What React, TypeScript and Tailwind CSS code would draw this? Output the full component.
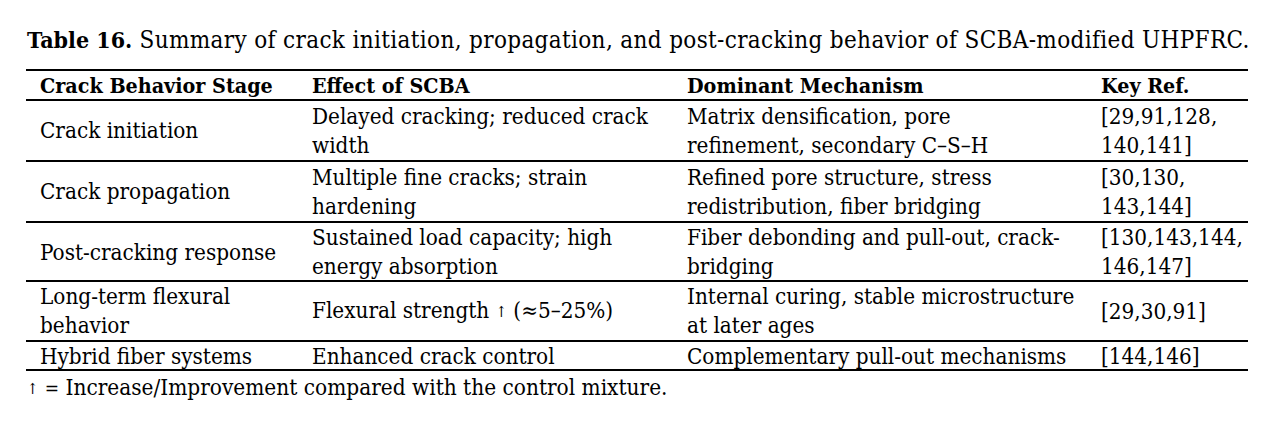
import React from "react";

type Cell = string[];
const rows: { c: Cell[]; h: string }[] = [
  { c: [["Crack initiation"], ["Delayed cracking; reduced crack", "width"], ["Matrix densification, pore", "refinement, secondary C–S–H"], ["[29,91,128,", "140,141]"]], h: "h-[61px]" },
  { c: [["Crack propagation"], ["Multiple fine cracks; strain", "hardening"], ["Refined pore structure, stress", "redistribution, fiber bridging"], ["[30,130,", "143,144]"]], h: "h-[61px]" },
  { c: [["Post-cracking response"], ["Sustained load capacity; high", "energy absorption"], ["Fiber debonding and pull-out, crack-", "bridging"], ["[130,143,144,", "146,147]"]], h: "h-[59px]" },
  { c: [["Long-term flexural", "behavior"], ["FLEX"], ["Internal curing, stable microstructure", "at later ages"], ["[29,30,91]"]], h: "h-[60px]" },
  { c: [["Hybrid fiber systems"], ["Enhanced crack control"], ["Complementary pull-out mechanisms"], ["[144,146]"]], h: "h-[29px]" },
];

const cols = "grid grid-cols-[272px_375px_414px_161px]";

function Arrow() {
  return <span className="text-[15px] align-[1px]">↑</span>;
}

export default function App() {
  return (
    <div
      className="w-[1275px] h-[428px] bg-white text-black"
      style={{ fontFamily: '"DejaVu Serif Condensed", "DejaVu Serif", serif', fontStretch: "condensed" }}
    >
      <div className="pt-[26px] pl-[27px] text-[24px] leading-[28px] whitespace-nowrap">
        <span className="font-bold text-[23px]">Table 16.</span>
        <span className="tracking-[0.35px]"> Summary of crack initiation, propagation, and post-cracking behavior of SCBA-modified UHPFRC.</span>
      </div>
      <div className="ml-[26px] mt-[15px] w-[1222px] border-t-2 border-black text-[22.3px] leading-[29px]">
        <div className={`${cols} h-[30px] border-b-2 border-black font-bold items-center text-[21.3px]`}>
          <div className="pl-[14px]">Crack Behavior Stage</div>
          <div className="pl-[14px]">Effect of SCBA</div>
          <div className="pl-[14px]">Dominant Mechanism</div>
          <div className="pl-[14px]">Key Ref.</div>
        </div>
        {rows.map((r, i) => (
          <div key={i} className={`${cols} ${r.h} border-b-2 border-black items-center`}>
            {r.c.map((lines, j) => (
              <div key={j} className="pl-[14px] whitespace-nowrap">
                {lines.map((t, k) => (
                  <div key={k}>
                    {t === "FLEX" ? (
                      <>
                        Flexural strength <Arrow /> (≈5–25%)
                      </>
                    ) : (
                      t
                    )}
                  </div>
                ))}
              </div>
            ))}
          </div>
        ))}
      </div>
      <div className="pl-[27px] pt-[2px] text-[22.4px] leading-[29px] whitespace-nowrap">
        <Arrow /> <span className="text-[19px]">=</span> Increase/Improvement compared with the control mixture.
      </div>
    </div>
  );
}
